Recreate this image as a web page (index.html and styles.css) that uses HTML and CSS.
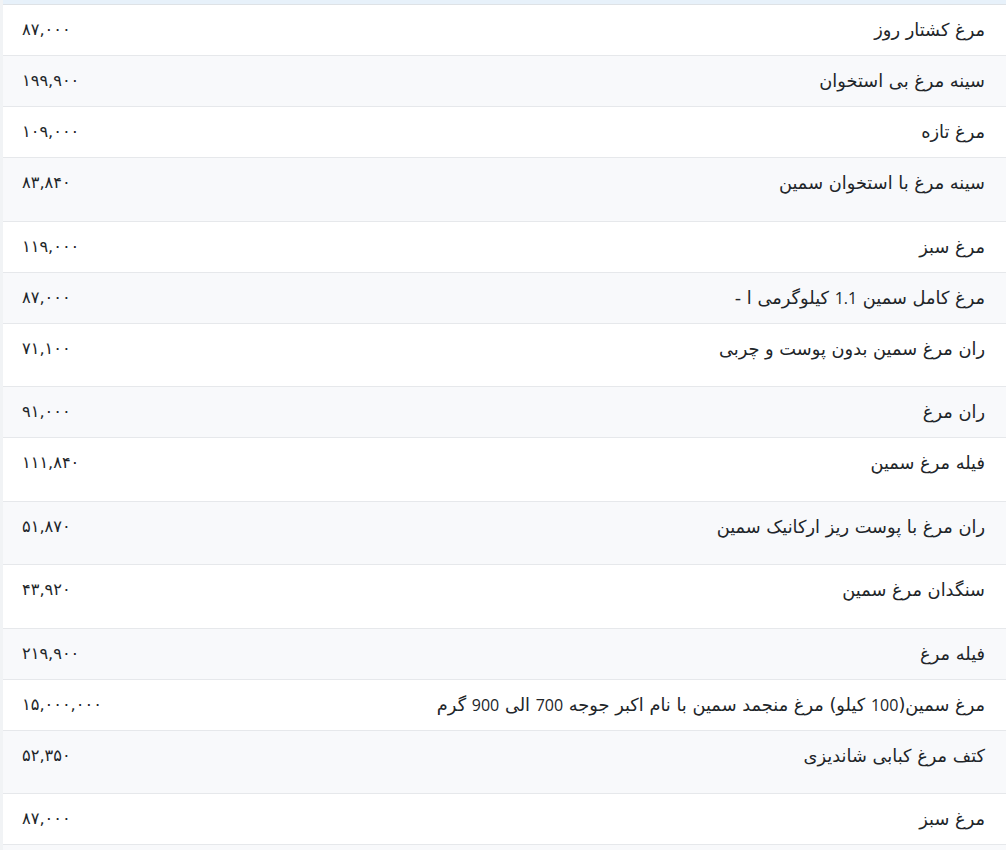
FILE: index.html
```html
<!DOCTYPE html>
<html lang="fa" dir="rtl">
<head>
<meta charset="utf-8">
<title>قیمت مرغ</title>
<link rel="stylesheet" href="styles.css">
</head>
<body>
<div class="wrap">
  <div class="head-strip"></div>
  <table class="prices">
    <tbody>
      <tr><td class="name">مرغ کشتار روز</td><td class="price">۸۷,۰۰۰</td></tr>
      <tr><td class="name">سینه مرغ بی استخوان</td><td class="price">۱۹۹,۹۰۰</td></tr>
      <tr><td class="name">مرغ تازه</td><td class="price">۱۰۹,۰۰۰</td></tr>
      <tr class="tall"><td class="name">سینه مرغ با استخوان سمین</td><td class="price">۸۳,۸۴۰</td></tr>
      <tr><td class="name">مرغ سبز</td><td class="price">۱۱۹,۰۰۰</td></tr>
      <tr><td class="name">مرغ کامل سمین <span class="lat">1.1</span> کیلوگرمی ا -</td><td class="price">۸۷,۰۰۰</td></tr>
      <tr class="tall"><td class="name">ران مرغ سمین بدون پوست و چربی</td><td class="price">۷۱,۱۰۰</td></tr>
      <tr><td class="name">ران مرغ</td><td class="price">۹۱,۰۰۰</td></tr>
      <tr class="tall"><td class="name">فیله مرغ سمین</td><td class="price">۱۱۱,۸۴۰</td></tr>
      <tr class="tall"><td class="name">ران مرغ با پوست ریز ارکانیک سمین</td><td class="price">۵۱,۸۷۰</td></tr>
      <tr class="tall"><td class="name">سنگدان مرغ سمین</td><td class="price">۴۳,۹۲۰</td></tr>
      <tr><td class="name">فیله مرغ</td><td class="price">۲۱۹,۹۰۰</td></tr>
      <tr><td class="name">مرغ سمین(<span class="lat">100</span> کیلو) مرغ منجمد سمین با نام اکبر جوجه <span class="lat">700</span> الی <span class="lat">900</span> گرم</td><td class="price">۱۵,۰۰۰,۰۰۰</td></tr>
      <tr class="tall"><td class="name">کتف مرغ کبابی شاندیزی</td><td class="price">۵۲,۳۵۰</td></tr>
      <tr><td class="name">مرغ سبز</td><td class="price">۸۷,۰۰۰</td></tr>
      <tr class="filler"><td class="name"></td><td class="price"></td></tr>
    </tbody>
  </table>
</div>
</body>
</html>
```
FILE: styles.css
```css
html, body {
  margin: 0;
  padding: 0;
}
body {
  background: #f1f3f5;
  font-family: "DejaVu Sans", "Noto Sans", sans-serif;
  color: #212529;
  font-size: 16px;
}
.wrap {
  width: 1003px;
  background: #ffffff;
  margin-right: 0;
  margin-left: auto;
}
.head-strip {
  height: 4px;
  background: #e7f1fa;
  border-bottom: 1px solid #dee2e6;
}
.prices {
  width: 100%;
  border-collapse: collapse;
}
.prices td {
  padding: 12px 21px 12px 19px;
  line-height: 26px;
  height: 26px;
  vertical-align: top;
  border-bottom: 1px solid #e6e8eb;
  white-space: nowrap;
}
.prices tr:nth-child(even) td {
  background: #f8f9fb;
}
.prices tr.tall td {
  padding-bottom: 24.5px;
}
.name {
  text-align: right;
  width: 100%;
  font-size: 17.8px;
}
.lat {
  font-family: "Open Sans", "DejaVu Sans", sans-serif;
  font-size: 16px;
}
.price {
  text-align: left;
  font-size: 16.2px;
}
```
